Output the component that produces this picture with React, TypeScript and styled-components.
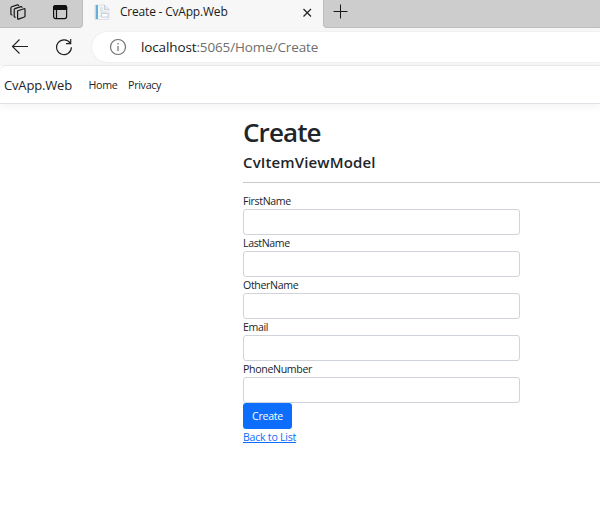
import React from "react";
import styled, { createGlobalStyle } from "styled-components";

const GlobalStyle = createGlobalStyle`
  * { box-sizing: border-box; }
  body {
    margin: 0;
    background: #fff;
    color: #212529;
    font-family: "Open Sans", "Noto Sans", sans-serif;
    overflow: hidden;
  }
`;

const Window = styled.div`
  width: 600px;
  height: 520px;
  overflow: hidden;
  background: #fff;
`;

const Chrome = styled.header`
  height: 66px;
  background: #f7f7f7;
`;

const TabStrip = styled.div`
  display: flex;
  height: 28px;
`;

const StripSide = styled.div<{ $side: "left" | "right" }>`
  display: flex;
  flex: ${(p) => (p.$side === "left" ? "0 0 83px" : "1")};
  height: 28px;
  background: #cdcdcd;
  border-bottom: 1px solid #bcbcbc;
  border-${(p) => (p.$side === "left" ? "right" : "left")}: 1px solid #bcbcbc;
  border-bottom-${(p) => (p.$side === "left" ? "right" : "left")}-radius: 4px;
`;

const StripIcons = styled.div`
  display: flex;
  gap: 24px;
  padding: 3px 0 0 9px;
`;

const PlusSlot = styled.div`
  padding: 4px 0 0 9px;
  line-height: 0;
`;

const Tab = styled.div`
  display: flex;
  flex: 0 0 240px;
  padding-left: 11px;
  background: #f7f7f7;
`;

const Favicon = styled.svg`
  margin-top: 4px;
`;

const TabTitle = styled.span`
  width: 182px;
  margin-left: 10px;
  color: #1b1b1b;
  font-size: 12px;
  line-height: 24px;
  letter-spacing: -0.2px;
  white-space: nowrap;
`;

const CloseIcon = styled.svg`
  margin-top: 8px;
`;

const Toolbar = styled.div`
  display: flex;
  height: 38px;
  padding: 4px 0 4px 11px;
`;

const BackIcon = styled.svg`
  margin: 6px 26px 0 0;
`;

const ReloadIcon = styled.svg`
  margin: 6px 18px 0 0;
`;

const AddressBar = styled.div`
  display: flex;
  flex: 1;
  height: 30px;
  padding-left: 17px;
  background: #fff;
  border-radius: 15px 0 0 15px;
  box-shadow: 0 0 2px rgba(0, 0, 0, 0.1);
`;

const InfoIcon = styled.svg`
  margin: 6px 14px 0 0;
`;

const Url = styled.span`
  color: #6e6e6e;
  font-size: 13.5px;
  line-height: 30px;
  letter-spacing: -0.13px;
  white-space: nowrap;
`;

const Host = styled.span`
  color: #1b1b1b;
`;

const Navbar = styled.nav`
  position: relative;
  display: flex;
  height: 39px;
  margin-top: -1px;
  padding-left: 4px;
  background: #fff;
  border-top: 1px solid #e8e8e8;
  border-bottom: 1px solid #dee2e6;
  border-top-left-radius: 6px;
  box-shadow: 0 3px 8px rgba(0, 0, 0, 0.05);
`;

const Brand = styled.span`
  width: 84.5px;
  color: #212529;
  font-size: 13px;
  line-height: 38px;
  letter-spacing: -0.16px;
`;

const NavLink = styled.a<{ $width: number }>`
  width: ${(p) => p.$width}px;
  color: #212529;
  font-size: 10.7px;
  line-height: 38px;
  letter-spacing: -0.3px;
`;

const Main = styled.main`
  padding: 11px 0 0 243px;
`;

const Title = styled.h1`
  margin: 0 0 1px;
  font-size: 26px;
  font-weight: 600;
  line-height: 34px;
  letter-spacing: -0.9px;
`;

const Subtitle = styled.h4`
  margin: 0;
  font-size: 15px;
  font-weight: 600;
  line-height: 24px;
  letter-spacing: 0.13px;
`;

const Divider = styled.hr`
  height: 1px;
  margin: 8px 0 10px;
  border: 0;
  background: #c8c9ca;
`;

const Form = styled.form`
  width: 277px;
`;

const Label = styled.label<{ $tracking: number }>`
  display: block;
  height: 16px;
  font-size: 10.6px;
  line-height: 16px;
  letter-spacing: ${(p) => p.$tracking}px;
`;

const Input = styled.input`
  display: block;
  width: 277px;
  height: 26px;
  padding: 4px 8px;
  border: 1px solid #ced4da;
  border-radius: 3px;
  background: #fff;
  font: inherit;
  font-size: 10.4px;
`;

const Submit = styled.button`
  display: block;
  width: 49px;
  height: 26px;
  padding: 0;
  border: 0;
  border-radius: 3px;
  background: #0d6efd;
  color: #fff;
  font-family: inherit;
  font-size: 10.6px;
  line-height: 26px;
  letter-spacing: -0.25px;
`;

const BackLink = styled.a`
  display: block;
  width: max-content;
  color: #0d6efd;
  font-size: 10.6px;
  line-height: 16px;
  letter-spacing: -0.25px;
  text-decoration: underline;
`;

const fields = [
  { name: "FirstName", tracking: -0.33 },
  { name: "LastName", tracking: -0.38 },
  { name: "OtherName", tracking: -0.35 },
  { name: "Email", tracking: -0.35 },
  { name: "PhoneNumber", tracking: -0.33 },
];

export default function App() {
  return (
    <>
      <GlobalStyle />
      <Window>
        <Chrome>
          <TabStrip>
            <StripSide $side="left">
              <StripIcons>
                <svg width="18" height="18" viewBox="0 0 18 18" fill="none" stroke="#151515" strokeWidth="1.2" strokeLinejoin="round" strokeLinecap="round">
                  <path d="M8.900 7.700 15 5.700q1-.2 1 .7v6.600q0 .7-.7 1L9.600 16.100q-1 .3-1-.7V8.500q0-.6.3-.8Z" />
                  <path d="M6.200 14.200q-1 0-1-1V6.700q0-.8.7-1.100l5.900-2q1-.2 1.200.8" />
                  <path d="M2.900 12q-1-.1-1-1V4.900q0-.8.8-1.100L8.300 1.900q1-.2 1.300.5" />
                </svg>
                <svg width="18" height="18" viewBox="0 0 18 18" fill="none" stroke="#111" strokeWidth="1.200">
                  <rect x="2.600" y="2.600" width="13" height="13" rx="2" />
                  <path d="M2.600 6.300V4.500q0-1.900 2-1.900h9q2 0 2 1.900v1.800Z" fill="#111" />
                  <path d="M5.500 6v9.500" />
                </svg>
              </StripIcons>
            </StripSide>
            <Tab>
              <Favicon width="16" height="16" viewBox="0 0 16 16">
                <path d="M1 1h10l4 4v10.500H1Z" fill="#f3f6f8" stroke="#d3dbe1" strokeWidth=".7" />
                <path d="M1 1h3v14H1Z" fill="#65afd9" />
                <path d="M1 1h1v14H1Z" fill="#b9dcef" />
                <path d="M10.500 1v4.500H15" fill="#e5eaef" stroke="#b9c5cf" strokeWidth=".8" />
                <path d="M6 4h3M6 6h3M6 8h7M6 12h2" stroke="#c6d0d8" strokeWidth=".8" />
                <path d="M7.500 9.500H14V13H7.500Z" fill="#fff" stroke="#bac7d1" strokeWidth=".8" />
              </Favicon>
              <TabTitle>Create - CvApp.Web</TabTitle>
              <CloseIcon width="10" height="10" viewBox="0 0 10 10" stroke="#222" strokeWidth="1.200">
                <path d="m1.500 1 7.500 7.500m0-7.500L1.500 8.500" />
              </CloseIcon>
            </Tab>
            <StripSide $side="right">
              <PlusSlot>
                <svg width="16" height="16" viewBox="0 0 16 16" stroke="#181818" strokeWidth="1">
                  <path d="M7.500.500v14M.500 7.500h14" />
                </svg>
              </PlusSlot>
            </StripSide>
          </TabStrip>
          <Toolbar>
            <BackIcon width="18" height="18" viewBox="0 0 18 18" fill="none" stroke="#222" strokeWidth="1.100">
              <path d="M17 8.500H1.500M8.500 1.500l-7 7 7 7" />
            </BackIcon>
            <ReloadIcon width="19" height="18" viewBox="0 0 19 18" fill="none" stroke="#222" strokeWidth="1.200">
              <path d="M15.200 5.200A7.400 7.400 0 1 0 16.400 9.300M15.700 1v4.700H11" />
            </ReloadIcon>
            <AddressBar>
              <InfoIcon width="18" height="18" viewBox="0 0 18 18" fill="none" stroke="#707070" strokeWidth="1.200">
                <circle cx="9" cy="9" r="7.500" />
                <path d="M9 8v5M9 5v1.500" />
              </InfoIcon>
              <Url>
                <Host>localhost</Host>:5065/Home/Create
              </Url>
            </AddressBar>
          </Toolbar>
        </Chrome>
        <Navbar>
          <Brand>CvApp.Web</Brand>
          <NavLink $width={39.5}>Home</NavLink>
          <NavLink $width={40}>Privacy</NavLink>
        </Navbar>
        <Main>
          <Title>Create</Title>
          <Subtitle>CvItemViewModel</Subtitle>
          <Divider />
          <Form onSubmit={(e) => e.preventDefault()}>
            {fields.map((field) => (
              <React.Fragment key={field.name}>
                <Label htmlFor={field.name} $tracking={field.tracking}>{field.name}</Label>
                <Input id={field.name} name={field.name} />
              </React.Fragment>
            ))}
            <Submit type="submit">Create</Submit>
          </Form>
          <BackLink href="#">Back to List</BackLink>
        </Main>
      </Window>
    </>
  );
}
